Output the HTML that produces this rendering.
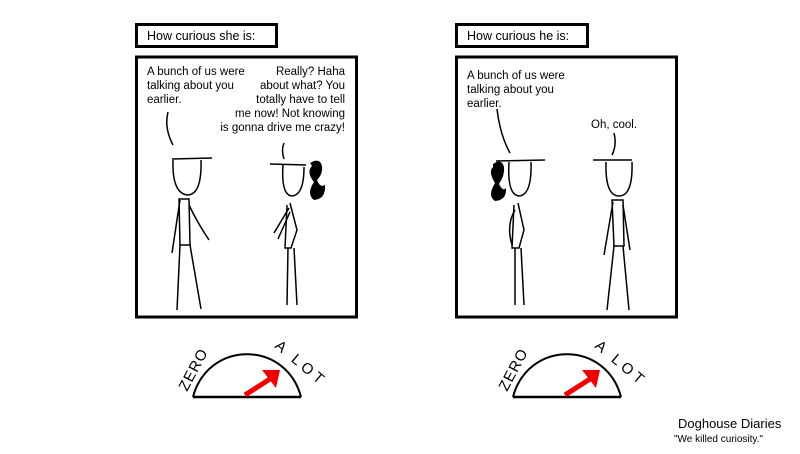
<!DOCTYPE html>
<html><head><style>
body{margin:0;background:#fff;width:800px;height:454px;overflow:hidden}
svg{display:block}
text{font-family:"Liberation Sans",sans-serif;fill:#000}
</style></head><body>
<svg width="800" height="454" viewBox="0 0 800 454">
<g fill="none" stroke="#000">
<rect x="136.5" y="24.5" width="140" height="22" stroke-width="3"/>
<rect x="136.5" y="57" width="220" height="260" stroke-width="3"/>
<rect x="456.5" y="24.5" width="131" height="22" stroke-width="3"/>
<rect x="456.5" y="57" width="220" height="260" stroke-width="3"/>
</g>
<g font-size="11.5">
<text x="147" y="40" font-size="12.5">How curious she is:</text>
<text x="467" y="40" font-size="12.5">How curious he is:</text>
<text x="147" y="75">A bunch of us were</text>
<text x="147" y="89">talking about you</text>
<text x="147" y="103">earlier.</text>
<g text-anchor="end"><text x="345" y="75">Really?  Haha</text><text x="345" y="89">about what? You</text><text x="345" y="103">totally have to tell</text><text x="345" y="117">me now!  Not knowing</text><text x="345" y="131">is gonna drive me crazy!</text></g>
<text x="467" y="79">A bunch of us were</text>
<text x="467" y="93">talking about you</text>
<text x="467" y="107">earlier.</text>
<text x="591" y="128">Oh, cool.</text>
</g>
<g fill="none" stroke="#000" stroke-width="1.5">
<path d="M168 112 Q164 128 173 145"/>
<path d="M172 159 L212 158"/>
<path d="M173 160 Q172 194 188 195 Q202 194 201 160"/>
<path d="M179 199 L189 199 L190 245 L180 245 Z"/>
<path d="M180 200 L172 253"/><path d="M189 205 Q197 222 209 240"/>
<path d="M180 245 L177 310"/><path d="M190 245 L201 309"/>
<path d="M284 143 Q281 150 284 159"/>
<path d="M270 164 L306 165"/>
<path d="M283 165 Q281 195 292 196 Q304 195 304 167"/>
<path d="M290 203 L297 230 L291 248 L285 248 L287 205"/>
<path d="M289 208 L274 233"/><path d="M290 212 L278 239"/>
<path d="M288 248 L287 305"/><path d="M294 248 L297 305"/>
<path d="M497 109 Q500 135 510 153"/>
<path d="M496 161 L545 160"/>
<path d="M509 162 Q507 195 519 196 Q532 195 531 162"/>
<path d="M518 203 L524 230 L519 248 L512 248 L514 205"/>
<path d="M515 210 Q506 225 512 245"/>
<path d="M515 248 L515 305"/><path d="M521 248 L524 305"/>
<path d="M614 133 Q617 145 612 155"/>
<path d="M593 160 L632 160"/>
<path d="M606 162 Q605 196 619 196 Q633 196 632 162"/>
<path d="M612 200 L623 200 L624 246 L614 246 Z"/>
<path d="M613 202 L604 255"/><path d="M623 205 L630 250"/>
<path d="M614 246 L607 310"/><path d="M623 246 L629 310"/>
</g>
<g fill="#000">
<path d="M310 163 Q320 157 322 166 Q323 174 317 180 Q320 188 325 185 Q326 199 314 200 Q306 194 314 182 Q306 172 312 166 Z"/>
<path d="M493 164 Q502 158 504 167 Q505 175 499 184 Q503 192 506 188 Q507 200 495 201 Q487 196 495 183 Q488 172 493 167 Z"/>
</g>
<g id="g1">
<path d="M193 397 C208 340 286 340 301 397" fill="none" stroke="#000" stroke-width="2"/>
<line x1="193" y1="397" x2="301" y2="397" stroke="#000" stroke-width="2.5"/>
<line x1="245" y1="395" x2="270" y2="379" stroke="#e00" stroke-width="5"/>
<path d="M262 370 L280 370 L276 388 Z" fill="#e00"/>
<text x="0" y="0" font-size="15" transform="translate(187 392) rotate(-62)" letter-spacing="1">ZERO</text>
<text x="0" y="0" font-size="15" transform="translate(274 347) rotate(40)" letter-spacing="4">A LOT</text>
</g>
<use href="#g1" x="320"/>
<text x="678" y="428" font-size="13">Doghouse Diaries</text>
<text x="674" y="442" font-size="10">"We killed curiosity."</text>
</svg>
</body></html>
